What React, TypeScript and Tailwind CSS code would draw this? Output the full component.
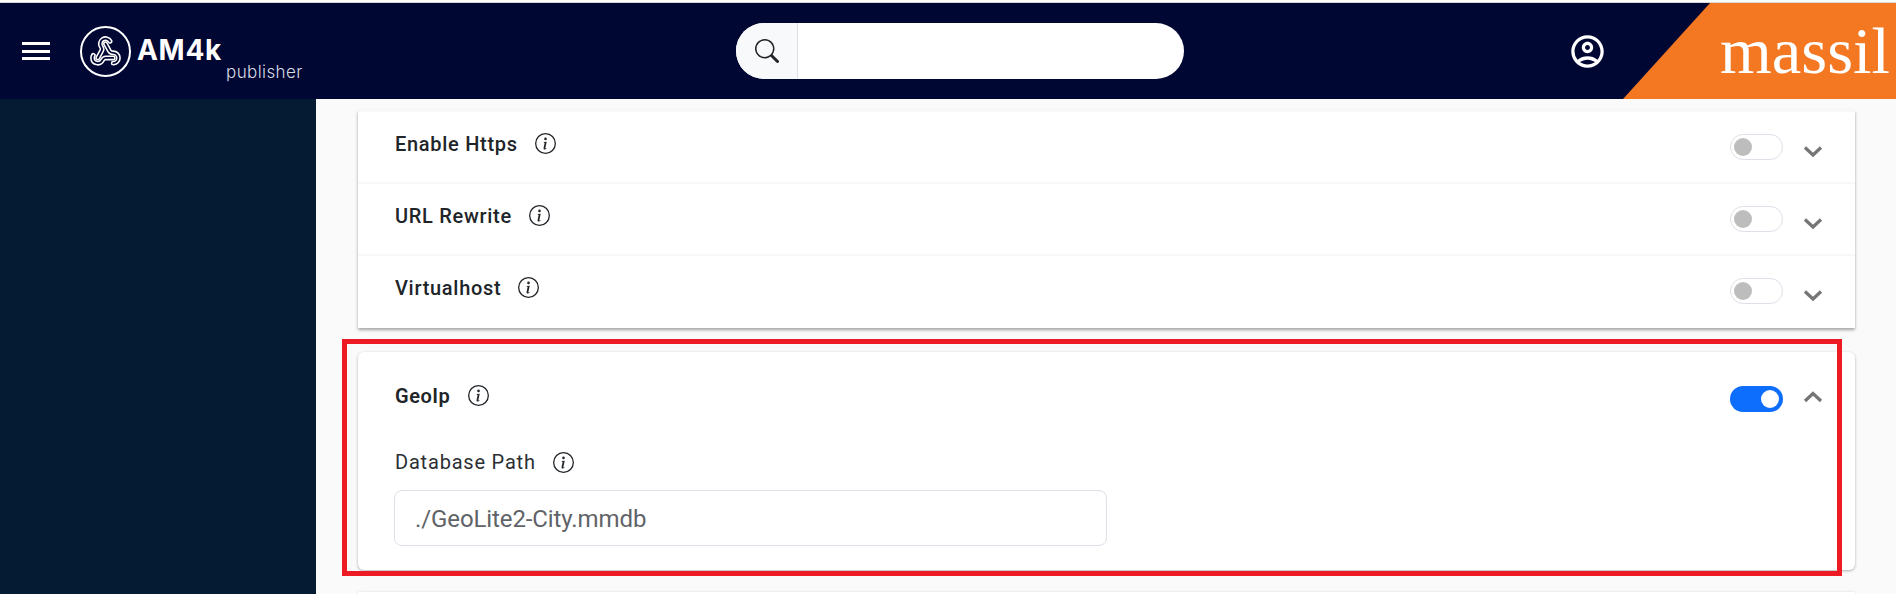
import { Webhook } from "lucide-react";
import { BsInfoCircle, BsSearch } from "react-icons/bs";
import { MdOutlineAccountCircle } from "react-icons/md";

function Toggle({ on }: { on?: boolean }) {
  return on ? (
    <div className="flex h-[26px] w-[53px] items-center justify-end rounded-full bg-[#0d6efd] px-[4px]">
      <div className="h-[18px] w-[18px] rounded-full bg-white" />
    </div>
  ) : (
    <div className="flex h-[26px] w-[53px] items-center rounded-full border border-[#dfe0e8] bg-white px-[3px]">
      <div className="h-[18px] w-[18px] rounded-full bg-[#bdbdbd]" />
    </div>
  );
}

function Chevron({ up }: { up?: boolean }) {
  return (
    <svg width="32" height="32" viewBox="0 0 32 32" fill="none" stroke="#757575" strokeWidth="3.2" className={up ? "mt-[-4px]" : "mt-[8px]"}>
      <polyline points={up ? "8,20 16,12.5 24,20" : "8,12.5 16,20 24,12.5"} />
    </svg>
  );
}

function Row({ label }: { label: string }) {
  return (
    <div className="flex h-[72px] items-center border-t-2 border-[#f8f8f8] pl-[37px] pr-[26px]">
      <span className="mt-[-7px] text-[20px] font-medium tracking-[0.7px] text-[#212529]">{label}</span>
      <BsInfoCircle className="ml-[17px] mt-[-7px] text-[#212529]" size={21} />
      <div className="ml-auto flex items-center gap-[14px]">
        <Toggle />
        <Chevron />
      </div>
    </div>
  );
}

export default function App() {
  return (
    <div className="relative flex h-[594px] w-[1896px] flex-col overflow-hidden bg-white font-['Roboto',sans-serif]">
      <div className="h-[3px] shrink-0 border-t border-b border-t-white border-b-[#d8d8d8] bg-white" />
      <header className="flex h-[96px] shrink-0 items-center bg-[#000733]">
        <div className="ml-[22px] flex w-[28px] flex-col gap-[4.5px]">
          <div className="h-[3px] bg-white" />
          <div className="h-[3px] bg-white" />
          <div className="h-[3px] bg-white" />
        </div>
        <div className="ml-[30px] flex h-[51px] w-[51px] items-center justify-center">
          <div className="relative flex h-[51px] w-[51px] items-center justify-center rounded-full border-[2.5px] border-white">
            <Webhook className="absolute text-white" size={31} strokeWidth={3.8} />
            <Webhook className="absolute text-[#000733]" size={31} strokeWidth={1.4} />
          </div>
        </div>
        <div className="relative ml-[6px] h-[51px] w-[166px] font-['Inter',sans-serif]">
          <div className="pt-[6px] text-[28px] leading-[36px] font-bold tracking-[0.7px] text-white">AM4k</div>
          <div className="absolute left-[89px] top-[36px] text-[17px] leading-[20px] font-light tracking-[0.4px] text-[#d8dae4]">publisher</div>
        </div>
        <div className="ml-[433px] flex h-[56px] w-[448px] overflow-hidden rounded-full bg-white">
          <div className="flex w-[62px] items-center justify-center border-r border-[#dee2e6] bg-[#f8f9fa]">
            <BsSearch className="text-[#212529]" size={24} />
          </div>
        </div>
        <MdOutlineAccountCircle className="ml-[384px] text-white" size={39} />
        <div className="ml-[16px] flex h-[96px] flex-1 items-center justify-end bg-[#f47722] pr-[6px] [clip-path:polygon(87px_0,100%_0,100%_100%,0_100%)]">
          <span className="font-['Liberation_Serif',serif] text-[66.5px] leading-none text-white">massil</span>
        </div>
      </header>
      <div className="flex min-h-0 flex-1">
        <aside className="w-[316px] bg-[#041b33]" />
        <main className="flex flex-1 flex-col bg-[#fafafa] pl-[42px] pr-[41px]">
          <section className="mt-[11px] shrink-0 bg-white pb-[2px] shadow-[0_2px_3px_rgba(0,0,0,0.35)]">
            <Row label="Enable Https" />
            <Row label="URL Rewrite" />
            <Row label="Virtualhost" />
          </section>
          <section className="mt-[24px] h-[218px] shrink-0 rounded-[6px] bg-white pl-[37px] pr-[26px] shadow-[0_1px_3px_rgba(0,0,0,0.3)]">
            <div className="flex h-[94px] items-center">
              <span className="mt-[-7px] text-[20px] font-semibold tracking-[0.5px] text-[#212529]">GeoIp</span>
              <BsInfoCircle className="ml-[18px] mt-[-7px] text-[#212529]" size={21} />
              <div className="ml-auto flex items-center gap-[14px]">
                <Toggle on />
                <Chevron up />
              </div>
            </div>
            <div className="mt-[2px] flex h-[28px] items-center">
              <span className="text-[20px] tracking-[0.8px] text-[#2b2f33]">Database Path</span>
              <BsInfoCircle className="ml-[17px] text-[#212529]" size={21} />
            </div>
            <div className="ml-[-1px] mt-[14px] flex h-[56px] w-[713px] items-center rounded-[8px] border border-[#dfe0e8] pl-[20px] pt-[1px] text-[24px] tracking-[-0.1px] text-[#5f6368]">
              ./GeoLite2-City.mmdb
            </div>
          </section>
          <div className="mt-[22px] h-[4px] shrink-0 bg-white shadow-[0_0_3px_rgba(0,0,0,0.12)]" />
        </main>
      </div>
      <div className="absolute left-[342px] top-[339px] h-[237px] w-[1500px] border-[5px] border-[#ed1c24]" />
    </div>
  );
}
